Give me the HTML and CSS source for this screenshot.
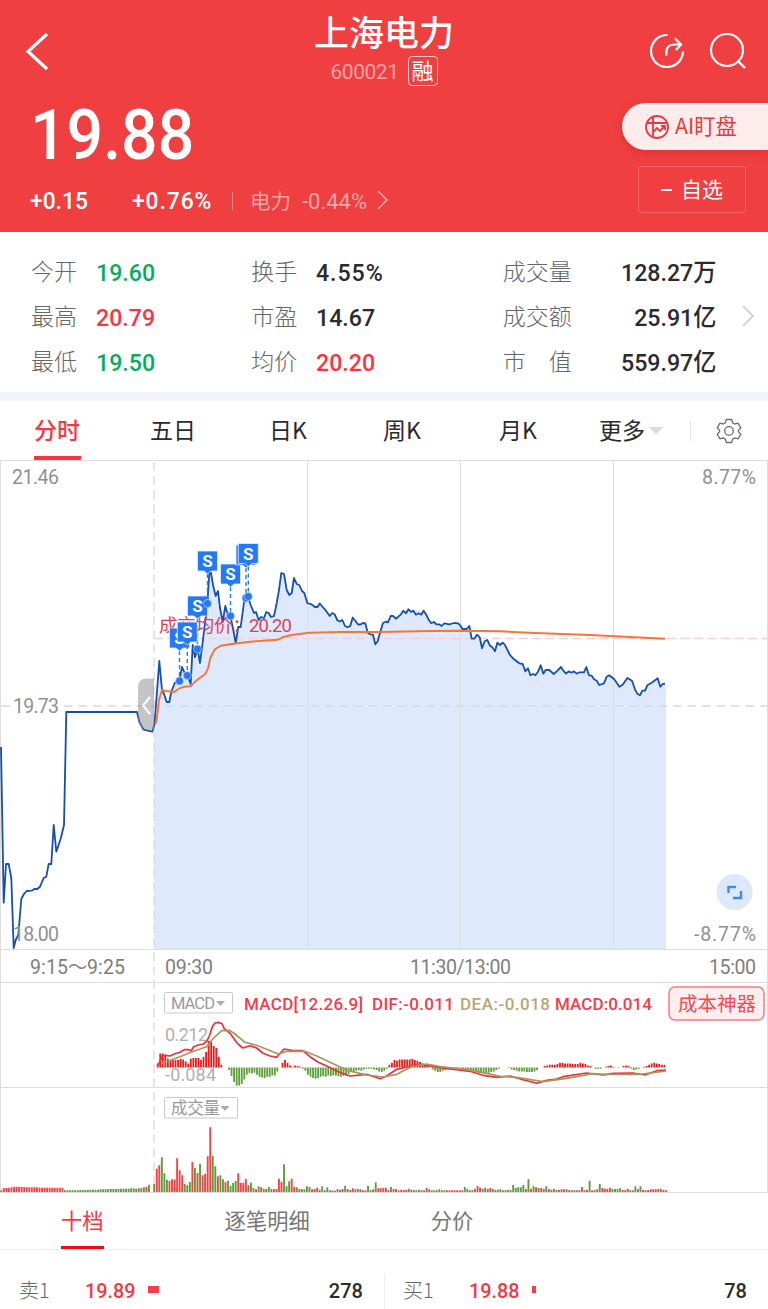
FILE: index.html
```html
<!DOCTYPE html>
<html lang="zh-CN">
<head>
<meta charset="utf-8">
<title>上海电力 600021</title>
<link rel="stylesheet" href="styles.css">
</head>
<body>
<header class="head">
  <div class="nav">
    <svg class="back" width="26" height="40" viewBox="0 0 26 40"><path d="M23 3 4 20.500 23 38"/></svg>
    <div class="name">
      <h1>上海电力</h1>
      <div class="code"><span class="num">600021</span><b>融</b></div>
    </div>
    <div class="tools">
      <svg width="38" height="38" viewBox="0 0 38 38"><path d="M18.500 3A16 16 0 1 0 34 19.500M17.500 23.500Q16 12.500 26 12.500H31.500M26 6.500l6 6-5 5.500"/></svg>
      <svg width="38" height="38" viewBox="0 0 38 38"><circle cx="18" cy="18" r="16"/><path d="m29 29 7 7"/></svg>
    </div>
  </div>
  <div class="quote">
    <div class="figures">
      <div class="price num">19.88</div>
      <div class="change">
        <span class="num diff">+0.15</span><span class="num pct">+0.76%</span><i class="bar"></i>
        <span class="sector">电力</span><span class="num sector-pct">-0.44%</span>
        <svg width="13" height="20" viewBox="0 0 13 20"><path d="m2 1 9 9-9 9"/></svg>
      </div>
    </div>
    <div class="actions">
      <div class="ai">
        <svg width="26" height="26" viewBox="0 0 26 26"><circle cx="13" cy="13" r="11"/><path d="M3 9H23M9 3V22M9 18l4-4 3 3 5-5M17 12h4v4"/></svg>
        <span>AI盯盘</span>
      </div>
      <div class="fav"><i></i><span>自选</span></div>
    </div>
  </div>
</header>

<section class="stats">
  <dl class="c1">
    <dt>今开</dt><dd class="down">19.60</dd>
    <dt>最高</dt><dd class="up">20.79</dd>
    <dt>最低</dt><dd class="down">19.50</dd>
  </dl>
  <dl class="c2">
    <dt>换手</dt><dd class="rate">4.55%</dd>
    <dt>市盈</dt><dd>14.67</dd>
    <dt>均价</dt><dd class="up">20.20</dd>
  </dl>
  <dl class="c3">
    <dt>成交量</dt><dd>128.27<em>万</em></dd>
    <dt>成交额</dt><dd>25.91<em>亿</em></dd>
    <dt>市　值</dt><dd>559.97<em>亿</em></dd>
  </dl>
  <svg class="more" width="14" height="22" viewBox="0 0 14 22"><path d="m2 1 10 10L2 21"/></svg>
</section>

<nav class="periods">
  <a class="on">分时</a><a>五日</a><a>日K</a><a>周K</a><a>月K</a>
  <a class="drop">更多<i></i></a>
  <span class="gear"><svg width="26" height="26" viewBox="0 0 26 26"><path d="M10.300 1.500h5.400l.9 3.200 2.300 1.300 3.200-.8 2.700 4.700-2.400 2.300v1.600l2.400 2.300-2.700 4.700-3.200-.8-2.300 1.300-.9 3.200h-5.400l-.9-3.200-2.300-1.300-3.200.8-2.700-4.700 2.400-2.300v-1.600L1.200 9.900l2.700-4.700 3.200.8 2.300-1.300z"/><circle cx="13" cy="13" r="4.300"/></svg></span>
</nav>

<svg class="chart" width="768" height="733" viewBox="0 460 768 733">
  <path class="grid" d="M0 460.500H768M0 949.500H768M0 982.500H768M0 1087.500H768M0 1192.500H768M.5 460V1192M767.500 460V1192"/>
  <path class="area" d="M154 949V729L159.300 661 162 690 164 694 166.700 702 169.300 702 171.300 692 174.700 683 179.300 681 182 667 184.700 673 187.300 675 190.700 684 192.700 645 195 657 197.700 649 200 663 202.700 642 207.300 604 209.300 573 211 573 213 585 215.700 596 218 591 220 608 222.700 622 225.300 606 228 615 230.300 616 233.300 630 235.700 643 238.300 627 240.700 627 244 602 248 597 250.700 605 254 613 256 612 258.700 620 261 617 264 618 266.300 612 268.700 613 271 617 274 616 276.700 603 279 590 281.300 573 284 574 286.700 590 289.300 595 291.700 593 294 578 296.700 584 299.300 585 302 591 304.300 593 307.300 603 315 607 319.700 603.500 329.700 616 334.700 614.500 340 621.500 347.700 627.300 352.700 617.500 358 624.500 365.300 623.300 367.700 632.700 373 634.700 375.300 644.300 377.700 641.300 383 623 390.700 616 398.300 616.700 408.500 609.300 423.700 610.700 431.300 623.300 441.700 626 458.300 623.300 462.300 629 469.300 626 471.700 638.700 479.700 637.300 482 648.300 487.300 640 495 651.300 497.300 642.700 504.700 644.700 510 655 522.700 664 525.300 671.300 530.300 675.300 535.300 675.300 540.700 665.300 543.300 673.700 549.300 670 553.700 674 561 667 566 673.700 584 672.300 586.300 667 589 675.300 599.300 685 604 683.300 609.300 675.300 619.300 686.700 627.300 678 632 680.700 637.300 693.700 640 695.300 647.300 685.300 657.700 678.300 660.300 686.700 666 683.700V949Z"/>
  <path class="grid inner" d="M307.500 460V949M460.500 460V949M613.500 460V949"/>
  <path class="dash" d="M154 462V1192"/>
  <path class="dash wide" d="M1 706H12M64 706H768"/>
  <path class="dash pink" d="M154 638.500H768"/>
  <path class="line" d="M1 747 3.700 902.700 6 864H8.700L11.300 878 13.700 948 15.700 940 18.300 935 21.300 899 24 894 26.700 891 31.700 890.700 34.300 889H37.300L40 886.700 43.700 878 46.300 876.700 48.700 864H51.300L53.700 825 56.300 851.700 60.700 838.700 64 825 66.300 712H137L139.300 721.700 143.300 729.300 146.700 730.300 152.300 731.700 154.500 724"/>
  <g class="axis">
    <text x="12" y="484" textLength="47">21.46</text>
    <text x="702" y="484" textLength="54">8.77%</text>
    <text x="13" y="713" textLength="46">19.73</text>
    <text x="13" y="941" textLength="46">18.00</text>
    <text x="694" y="941" textLength="62">-8.77%</text>
  </g>
  <g class="axis time">
    <text x="30" y="974" textLength="38">9:15</text><text x="68" y="974" textLength="19">～</text><text x="87" y="974" textLength="38">9:25</text>
    <text x="165" y="974" textLength="48">09:30</text>
    <text x="410" y="974" textLength="101">11:30/13:00</text>
    <text x="709" y="974" textLength="47">15:00</text>
  </g>
  <path class="line" d="M154.500 724 159.300 661 162 690 164 694 166.700 702 169.300 702 171.300 692 174.700 683 179.300 681 182 667 184.700 673 187.300 675 190.700 684 192.700 645 195 657 197.700 649 200 663 202.700 642 207.300 604 209.300 573 211 573 213 585 215.700 596 218 591 220 608 222.700 622 225.300 606 228 615 230.300 616 233.300 630 235.700 643 238.300 627 240.700 627 244 602 248 597 250.700 605 254 613 256 612 258.700 620 261 617 264 618 266.300 612 268.700 613 271 617 274 616 276.700 603 279 590 281.300 573 284 574 286.700 590 289.300 595 291.700 593 294 578 296.700 584 299.300 585 302 591 304.300 593 307.300 603 312 604.700 315 607 317.500 607 319.700 603.500 322.700 607 326 610.700 329.700 616 332.300 613 334.700 614.500 337.500 620.500 340 621.500 342.300 620 345 626 347.700 627.300 350.300 626 352.700 617.500 355.300 620.700 358 624.500 360.500 624.500 363 623 365.300 623.300 367.700 632.700 370.300 634.300 373 634.700 375.300 644.300 377.700 641.300 380.300 631.700 383 623 385.700 621.700 388 622.500 390.700 616 393.300 616 395.700 618.700 398.300 616.700 401 614.300 403.300 610.700 406 613.300 408.500 609.300 411 612 413.300 610.700 416 614.700 418.700 613.300 421.300 614.700 423.700 610.700 426.300 615 429 620.300 431.300 623.300 434 622 436.300 624.300 439 624.300 441.700 626 444.300 623.300 449.300 624.300 454 623 458.300 623.300 460.700 626 462.300 629 466.700 629 469.300 626 471.700 638.700 474.300 638.700 477 634.700 479.700 637.300 482 648.300 484.700 641.300 487.300 640 490 645.700 492.300 647.300 495 651.300 497.300 642.700 500 645 502.700 642.700 504.700 644.700 510 655 513.300 658.700 519.300 663.300 522.700 664 525.300 671.300 528 668.300 530.300 675.300 533 674 535.300 675.300 538 671.700 540.700 665.300 543.300 673.700 545.700 670 549.300 670 553.700 674 556.700 671.300 561 667 563.300 670.700 566 673.700 568.700 671.300 571.300 672.700 574 671.300 576.700 673.700 579.300 672.300 584 672.300 586.300 667 589 675.300 591.700 675.700 594 679.300 596.700 680.700 599.300 685 604 683.300 606.700 676.700 609.300 675.300 614.300 679.300 617 683.300 619.300 686.700 622.700 684.700 627.300 678 632 680.700 635 689.300 637.300 693.700 640 695.300 642.300 690.700 645 690.700 647.300 685.300 651.700 682.700 657.700 678.300 660.300 686.700 662.700 684 665 683.700"/>
  <path class="avg" d="M155.500 724 156.700 720 159 700 162 690 166 691 174 692 178.700 688.700 184.700 686.700 191.300 686 194.700 682 200 677.700 205.300 674 208 668.300 210.700 657 215 649.300 220.700 645.700 230 644.300 250 641.700 263 640.700 278 639.700 284 636.700 293 634.700 310 632.700 340 632 380 632 430 631 460 630.700 500 631.300 535 633 590 635 665 638.700"/>
  <g class="deal"><text x="159" y="632" textLength="92">成交均价：</text><text x="249" y="632" textLength="43">20.20</text></g>
  <g id="marks"></g>
  <g class="handle"><path class="grip" d="M154 678.500h-7q-9 0-9 9V718q0 13 16 13z"/><path class="chev" d="m150 697-7 8.500 7 8.500"/></g>
  <circle class="full" cx="734.500" cy="892" r="18"/>
  <path class="corner" d="M728.500 893V887H736M741 891V898H733"/>

  <g class="axis faint">
    <text x="165" y="1041" textLength="43">0.212</text>
    <text x="165" y="1081" textLength="51">-0.084</text>
  </g>
  <g id="macd"></g>
  <path class="dif" d="M157.700 1066 162 1056.700 165 1055.300 170 1056 175 1053.700 180 1052.300 184.300 1049.700 188.300 1049.700 191.300 1050.700 193.700 1046.700 198.300 1045 203.300 1044 206.700 1041.300 209.300 1036 212.700 1026 215 1023 218.700 1022.300 222.300 1024 224 1028.300 230 1033.300 237.300 1043.300 242.700 1048 250 1045.700 256.700 1048 262.700 1053 270 1056 276.700 1057.300 280.700 1052.700 284 1049 291.700 1050.300 302.700 1050.700 310 1056.700 318.300 1062.300 328.300 1066.700 338.300 1071.700 350 1076 366.700 1074.300 380 1078.700 386.700 1076 396.700 1069.300 406.700 1067 420 1064 433 1066.700 450 1069 470 1071.300 483 1075.300 496.700 1077.300 510 1076 523 1079.700 536.700 1083.300 546.700 1080.300 556.700 1079 563 1076.700 586.700 1073 603 1075 613 1073.300 633 1073 645 1075 656.700 1070.700 666 1070"/>
  <path class="dea" d="M162 1063.300 180 1056.700 191 1052.300 206.700 1046.700 213.300 1038.300 221.700 1030.700 229.300 1030.300 235 1034 245 1042.300 256.700 1045.300 278.300 1054 286.700 1051.300 305 1051.300 316.700 1056 330 1062.300 348.300 1070.700 366.700 1075 383 1077 396.700 1074.300 413 1066 426.700 1064 440 1066.700 466.700 1069.700 486.700 1073.300 500 1076.300 516.700 1077.300 543 1081.700 566.700 1078.300 593 1073.700 606.700 1074.300 640 1074.300 666 1071"/>
  <g class="picker">
    <rect x="164.500" y="992.500" width="68" height="20.500" rx="1"/><text x="171" y="1009" textLength="44">MACD</text><path d="M216 1001h9l-4.500 5z"/>
    <rect x="164.500" y="1097.500" width="73" height="20.500" rx="1"/><text x="171" y="1114" textLength="49">成交量</text><path d="M220.500 1106h9l-4.500 5z"/>
  </g>
  <g class="legend">
    <text x="244" y="1010" textLength="119">MACD[12.26.9]</text>
    <text x="372" y="1010" textLength="82">DIF:-0.011</text>
    <text class="tan" x="460" y="1010" textLength="90">DEA:-0.018</text>
    <text x="555" y="1010" textLength="97">MACD:0.014</text>
  </g>
  <g class="cost"><rect x="669" y="987" width="95" height="33" rx="6"/><text x="678" y="1011" textLength="78">成本神器</text></g>
  <g id="volume"></g>
</svg>

<nav class="depth-tabs"><a class="on">十档</a><a>逐笔明细</a><a>分价</a></nav>
<section class="book">
  <div class="side"><span class="lv">卖1</span><span class="p num">19.89</span><i class="q sell"></i><b class="num">278</b></div>
  <div class="side"><span class="lv">买1</span><span class="p num">19.88</span><i class="q buy"></i><b class="num">78</b></div>
</section>
<script src="chart.js"></script>
</body>
</html>
```
FILE: styles.css
```css
* { box-sizing: border-box; }
body { margin: 0; background: #fff; color: #2b2b2d; font-family: "Noto Sans CJK SC", sans-serif; width: 768px; height: 1309px; overflow: hidden; }
svg { display: block; flex: none; fill: none; }
a { color: inherit; }
.num { font-family: Roboto, sans-serif; transform-origin: 0 50%; }

.head { height: 232px; background: #f03f41; color: #fff; display: flex; flex-direction: column; }
.nav { height: 96px; display: grid; grid-template-columns: 1fr 200px 1fr; align-items: start; }
.back { margin: 31px 0 0 24px; stroke: #fff; stroke-width: 3.2; }
.name { text-align: center; }
h1 { margin: 11px 0 0; font-size: 35px; line-height: 39px; font-weight: 500; }
.code { display: flex; justify-content: center; align-items: center; gap: 9px; margin-top: 6px; height: 30px; }
.code .num { font-size: 21px; letter-spacing: -.45px; color: #f8a3a4; padding-top: 2px; }
.code b { width: 30px; height: 30px; border: 1.500px solid #fbc9c9; border-radius: 4px; font-size: 22px; line-height: 25px; font-weight: 400; }
.tools { display: flex; justify-content: flex-end; gap: 22px; padding: 32px 21px 0 0; }
.tools svg { stroke: #fff; stroke-width: 2.2; }
.quote { display: flex; justify-content: space-between; }
.figures { padding-left: 30px; }
.price { height: 78px; font-size: 70px; line-height: 78px; font-weight: 500; width: 180px; transform: scaleX(.92); }
.change { display: flex; align-items: center; height: 30px; margin-top: 12px; }
.diff, .pct { font-size: 24px; font-weight: 500; transform: scaleX(.95); }
.diff { width: 102px; }
.pct { width: 100px; letter-spacing: 1px; }
.bar { width: 1px; height: 18px; background: #f68688; margin-right: 17px; }
.sector { font-size: 20.500px; color: #f8a5a6; width: 52px; margin-top: -3px; }
.sector-pct { font-size: 22px; color: #f8a5a6; width: 74px; }
.change svg { stroke: #f8a5a6; stroke-width: 1.6; margin-top: -3px; }
.actions { padding-top: 7px; }
.ai { width: 146px; height: 47px; border-radius: 24px 0 0 24px; background: #fdecec; color: #e93a3c; display: flex; align-items: center; gap: 5px; padding-left: 22px; font-size: 21.300px; box-shadow: 0 3px 8px #b8202466; }
.ai span, .fav span { margin-top: -4px; }
.ai svg { stroke: #e93a3c; stroke-width: 1.8; }
.fav { width: 108px; height: 47px; margin: 16px 0 0 16px; border: 1px solid #f36466; border-radius: 3px; display: flex; align-items: center; justify-content: center; gap: 9px; font-size: 21px; }
.fav i { width: 11px; height: 2px; background: #fff; }

.stats { height: 169px; padding: 16px 13px 0 31px; border-bottom: 9px solid #f2f4f9; display: flex; align-items: flex-start; }
dl { margin: 0; display: grid; grid-auto-rows: 45px; align-items: center; line-height: 45px; }
dt { font-size: 23px; font-weight: 300; color: #666; }
dd { margin: 0; font: 500 24.500px/45px Roboto, "Noto Sans CJK SC", sans-serif; padding-top: 3px; transform: scaleX(.945); transform-origin: 0 50%; }
em { font: 500 24.500px/1 "Noto Sans CJK SC", sans-serif; }
.c1 { width: 221px; grid-template-columns: 65px auto; }
.c2 { width: 252px; grid-template-columns: 65px auto; }
.c3 { width: 214px; grid-template-columns: 80px auto; }
.c3 dd { text-align: right; transform-origin: 100% 50%; }
.rate { letter-spacing: 1px; }
.up { color: #fa3542; }
.down { color: #07ad5c; }
.more { margin: 57px 0 0 25px; stroke: #c9c9cc; stroke-width: 1.6; }

.periods { height: 59px; display: flex; font-size: 23px; line-height: 56px; padding-left: 34px; }
.periods a { width: 116px; height: 59px; }
.periods a:nth-child(3) { padding-left: 3px; width: 117px; }
.periods .on { width: 47px; margin-right: 69px; color: #fa3542; font-weight: 500; border-bottom: 4px solid #f9343f; }
.periods .drop { width: 91px; margin-left: -16px; display: flex; align-items: flex-start; gap: 4px; }
.drop i { margin-top: 26px; border: 7px solid transparent; border-top: 8px solid #dcdce2; border-bottom: 0; }
.gear { flex: 1; display: flex; align-items: center; padding-left: 26px; background: linear-gradient(#e3e3e6, #e3e3e6) 0 20px / 1px 20px no-repeat; }
.gear svg { stroke: #6f6f72; stroke-width: 1.3; }

.chart text { font-family: Roboto, "Noto Sans CJK SC", sans-serif; }
.grid { stroke: #dedede; }
.inner { stroke: #dcdde2; }
.area { fill: #dfe9fc; }
.dash { stroke: #dedee1; stroke-width: 1.500; stroke-dasharray: 9 5; }
.wide { stroke: #d3dae3; stroke-dasharray: 8.500 6; }
.pink { stroke: #f7cfd5; stroke-dasharray: 9 4.500; }
.axis { font-size: 19.500px; fill: #909090; }
.time { fill: #7e7e7e; }
.faint { font-size: 18px; fill: #b0b0b0; }
.line { stroke: #164fae; stroke-width: 1.8; stroke-linejoin: round; }
.avg { stroke: #fa7436; stroke-width: 1.9; stroke-linejoin: round; }
.deal { font-size: 18.500px; fill: #dc4256; }
.flag { fill: #2578f6; stroke: #e6f0ff; stroke-width: .8; }
.flag-s { fill: #fff; font-size: 17px; font-weight: 700; text-anchor: middle; }
.drop-line { stroke: #2578f6; stroke-width: 1.4; stroke-dasharray: 4 3; }
.dot { fill: #2578f6; stroke: #c8dcff; stroke-width: .6; }
.grip { fill: #8888887d; }
.chev { stroke: #fff; stroke-width: 2; }
.full { fill: #dce9fd; }
.corner { stroke: #4387f7; stroke-width: 2.4; }
.rise { stroke: #f01818; stroke-width: 1.8; }
.fall { stroke: #5b9f35; stroke-width: 1.8; }
.vol-rise { stroke: #fa4146; stroke-width: 1.9; }
.vol-fall { stroke: #5b9f3a; stroke-width: 1.9; }
.dif { stroke: #e8323a; stroke-width: 1.700; stroke-linejoin: round; }
.dea { stroke: #ae935c; stroke-width: 1.700; stroke-linejoin: round; }
.picker rect { stroke: #c9c9c9; fill: #fff; }
.picker text { font-size: 16.500px; fill: #999; }
.picker path { fill: #aaa; }
.legend { font-size: 17px; font-weight: 500; fill: #f63b49; }
.legend .tan { fill: #bda474; }
.cost rect { fill: #feeeee; stroke: #f77c80; stroke-width: 1.500; }
.cost text { font-size: 19.500px; fill: #f24a4f; }

.depth-tabs { height: 57px; border-bottom: 1px solid #eee; display: flex; padding-left: 61px; font-size: 21.300px; line-height: 54px; color: #777; }
.depth-tabs a { height: 56px; margin-right: 121px; }
.depth-tabs .on { color: #fa3542; border-bottom: 3px solid #ee0e12; }
.book { display: flex; height: 60px; padding-top: 24px; }
.side { width: 384px; height: 36px; display: flex; align-items: center; padding: 0 21px 3px 19px; font-size: 20px; }
.side + .side { border-left: 1px solid #eee; padding-left: 18px; }
.lv { width: 66px; font-weight: 300; color: #666; margin-top: -2px; }
.p { width: 63px; font-size: 21px; font-weight: 500; transform: scaleX(.94); color: #fa3542; }
.side b { margin-left: auto; font-size: 21px; font-weight: 500; transform: scaleX(.95); transform-origin: 100% 50%; }
.q { height: 7px; margin-top: -2px; background: #f83c48; }
.sell { width: 11px; }
.buy { width: 4px; }
```
FILE: chart.js
```javascript
const NS = "http://www.w3.org/2000/svg";
const STEP = 2.546;

function add(parent, tag, attrs, text) {
  const el = document.createElementNS(NS, tag);
  for (const key in attrs) el.setAttribute(key, attrs[key]);
  if (text) el.textContent = text;
  parent.appendChild(el);
}

// Sell marks: flag centre x, flag top, dot x, dot y
const marks = document.getElementById("marks");
[
  [179.5, 628, 179.5, 681], [197.500, 596, 197.500, 649], [187.300, 622, 187.300, 675.500],
  [207.500, 551, 207.500, 603.500], [230.500, 564, 230.500, 616],
  [246, 545, 246, 598], [248.300, 543.500, 248.300, 596.500]
].forEach(([x, y, dx, dy]) => {
  add(marks, "path", { class: "drop-line", d: `M${x} ${y + 23}V${dy - 4}` });
  add(marks, "path", { class: "flag", d: `M${x - 10} ${y}h20v20h-6.500l-3.500 3-3.500-3h-6.500z` });
  add(marks, "text", { class: "flag-s", x, y: y + 16 }, "S");
  add(marks, "circle", { class: "dot", cx: dx, cy: dy, r: 4 });
});

function bars(id, list, x0, base, names) {
  const paths = ["", ""];
  list.forEach((v, i) => {
    if (v) paths[v > 0 ? 0 : 1] += `M${(x0 + i * STEP).toFixed(2)} ${base}v${id === "macd" ? -v / 3 : -Math.abs(v) / 3}`;
  });
  paths.forEach((d, k) => add(document.getElementById(id), "path", { class: names[k], d }));
}

const macd = [12,42,42,38,26,20,22,22,22,26,24,18,12,26,28,28,28,22,32,46,80,77,64,58,32,8,0,
  0,-8,-26,-44,-54,-54,-50,-36,-22,-16,-18,-16,-22,-28,-30,-32,-28,-28,-24,-24,-12,0,
  14,22,14,6,2,6,4,2,-4,-10,-22,-28,-32,-34,-32,-28,-26,-28,-24,-26,-24,-24,-26,-28,-26,-24,-20,-14,-14,-10,-8,-10,-6,-4,-4,-4,-6,-8,-12,-14,-10,-4,
  8,14,22,20,24,24,24,24,24,26,22,20,16,12,8,4,0,-6,-10,-14,-14,-10,-8,-6,-6,-8,-6,-5,-6,-6,-8,-8,-10,-12,-14,-16,-14,-16,-16,-16,-14,-12,-8,-4,
  0,0,0,-2,-6,-8,-10,-12,-12,-12,-14,-14,-14,-12,-8,0,0,4,6,8,8,8,10,14,14,12,12,12,10,10,10,14,12,10,6,4,0,-4,-4,-4,0,2,4,6,2,0,-2,0,4,6,4,-4,-8,-6,-4,0,2,4,8,12,14,12,10,8,8];
bars("macd", macd, 157.700, 1067.400, ["rise", "fall"]);

const open = [5,12,12,13,14,16,16,16,15,15,14,14,14,14,14,13,13,13,13,13,13,13,13,13,13,
  -5,-5,-5,-5,-5,-5,-6,-6,-6,-7,-7,-7,-7,-7,-8,-8,-8,-9,-9,-9,-9,-10,-10,-10,-10,-10,-11,-11,10,-11,-12,-14,16,-22];
bars("volume", open, 1.300, 1192, ["vol-rise", "vol-fall"]);

const volume = [-24,70,80,-104,-56,-37,33,38,38,101,65,50,-24,-20,-30,91,-72,57,-84,50,55,107,194,-109,-77,47,-50,-38,30,-34,-18,-27,-33,56,27,28,39,20,-28,-12,8,-17,14,-10,9,-15,-10,9,9,40,30,-83,-17,-32,40,16,-14,9,-9,-8,-17,-15,8,9,13,7,-17,-5,-14,-5,5,4,-9,7,9,-19,-9,6,11,-8,-9,8,5,5,-18,-6,8,-29,11,11,12,13,5,-15,9,9,-5,7,6,6,-10,7,-6,-5,-7,5,-5,12,-8,-5,-5,-5,-8,-5,5,-5,5,5,5,5,5,5,-15,-10,5,5,-10,18,13,-10,-13,9,12,-10,-7,-7,8,-5,5,-7,-6,-21,-12,-14,-14,-21,9,-38,10,-17,14,-12,12,9,-17,9,7,-10,-6,6,8,8,-8,-6,5,5,-5,-6,15,5,6,-34,5,5,-8,-24,12,10,10,13,-9,-9,-9,-11,6,5,10,-6,-5,-17,-9,-17,6,5,6,8,8,8,9,-10,6,5];
bars("volume", volume, 154.200, 1192, ["vol-rise", "vol-fall"]);
```
